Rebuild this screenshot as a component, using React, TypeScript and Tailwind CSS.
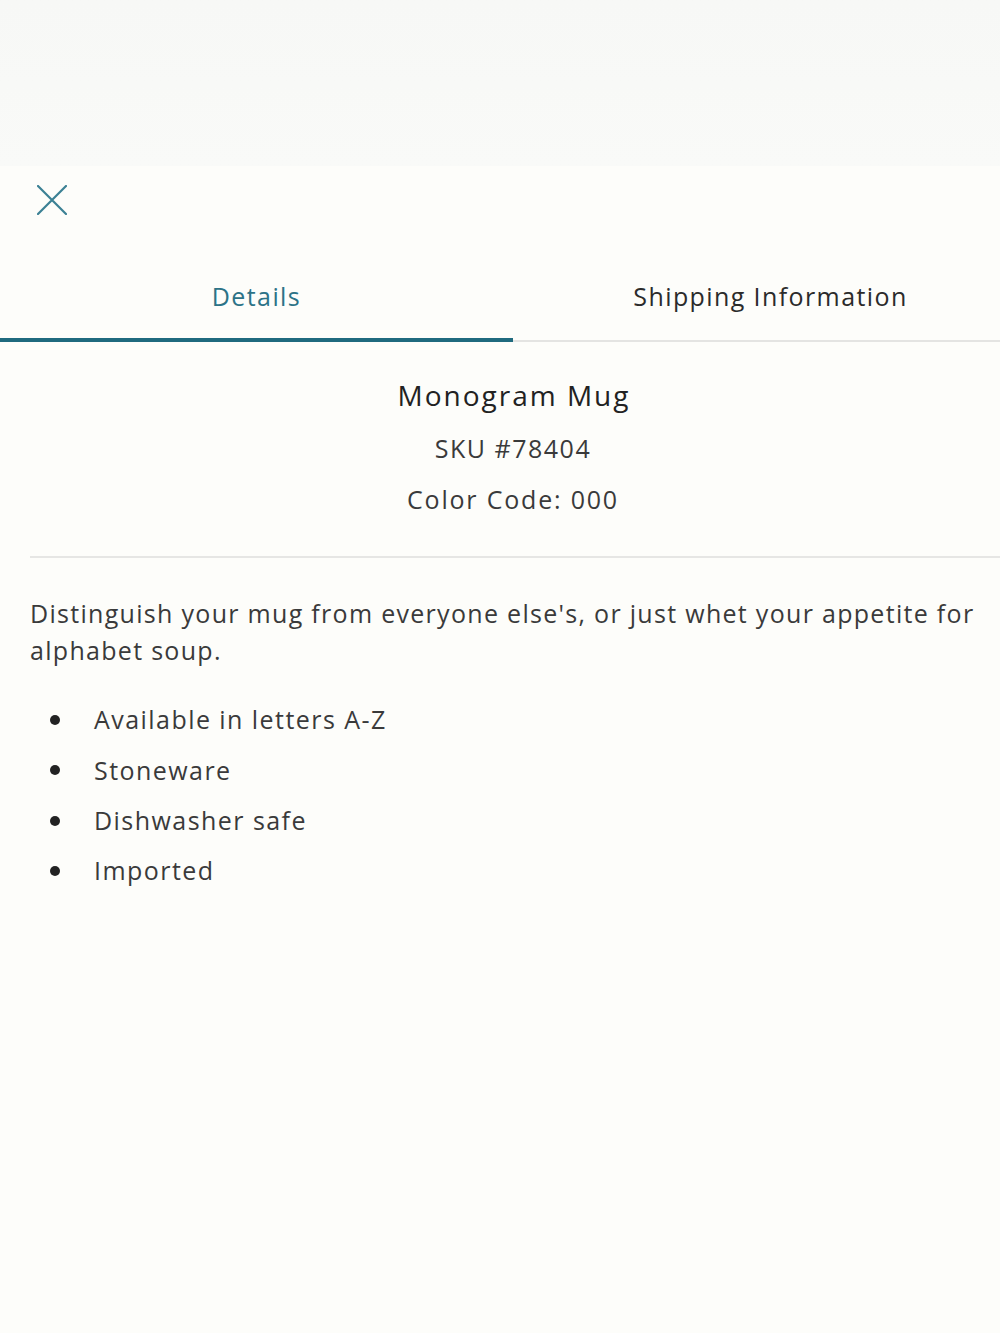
import React from "react";

export default function App() {
  const bullets = ["Available in letters A-Z", "Stoneware", "Dishwasher safe", "Imported"];
  return (
    <div className="w-[1000px] h-[1333px] bg-[#fdfdfa] text-[#333] flex flex-col" style={{ fontFamily: "'Open Sans', 'Noto Sans', sans-serif" }}>
      <div className="h-[166px] bg-gradient-to-b from-[#f7f8f6] to-[#f9faf8] shrink-0" />
      <div className="flex flex-col">
        <div className="h-[68px] flex items-center pl-[37px]">
          <svg width="30" height="30" viewBox="0 0 30 30" fill="none" stroke="#3b8194" strokeWidth="2.2" strokeLinecap="round">
            <path d="M1 1L29 29M29 1L1 29" />
          </svg>
        </div>
        <div className="flex">
          <div className="w-[513px] flex flex-col">
            <div className="h-[104px] pt-[22px] flex items-center justify-center text-[25px] tracking-[1.4px] text-[#2c7387]">Details</div>
            <div className="h-[4px] bg-[#1f6a7e]" />
          </div>
          <div className="flex-1 flex flex-col">
            <div className="h-[104px] pt-[22px] flex items-center justify-center text-[25px] tracking-[1.4px] text-[#2b2b2b] pl-[28px]">Shipping Information</div>
            <div className="h-[4px] flex flex-col justify-end">
              <div className="h-[2px] bg-[#e4e4e2]" />
            </div>
          </div>
        </div>
        <div className="flex flex-col items-center pt-[33px]">
          <div className="text-[28px] tracking-[2px] text-[#222] leading-[40px] pl-[28px]">Monogram Mug</div>
          <div className="text-[25px] tracking-[1.5px] leading-[36px] mt-[15px] text-[#3a3a3a] pl-[26px]">SKU #78404</div>
          <div className="text-[25px] tracking-[1.8px] leading-[36px] mt-[15px] text-[#3a3a3a] pl-[26px]">Color Code: 000</div>
        </div>
        <div className="ml-[30px] mt-[39px] h-[2px] bg-[#e6e6e4]" />
        <div className="pl-[30px] pr-[16px] pt-[37px] text-[25px] tracking-[1.3px] leading-[37px] text-[#3a3a3a]">
          Distinguish your mug from everyone else's, or just whet your appetite for alphabet soup.
        </div>
        <ul className="mt-[33px] flex flex-col gap-[14.3px]">
          {bullets.map((b) => (
            <li key={b} className="flex items-center h-[36px] text-[25px] tracking-[1.45px] text-[#3a3a3a]">
              <span className="w-[94px] flex justify-start pl-[50px]">
                <span className="w-[10px] h-[10px] rounded-full bg-[#222]" />
              </span>
              <span>{b}</span>
            </li>
          ))}
        </ul>
      </div>
    </div>
  );
}
